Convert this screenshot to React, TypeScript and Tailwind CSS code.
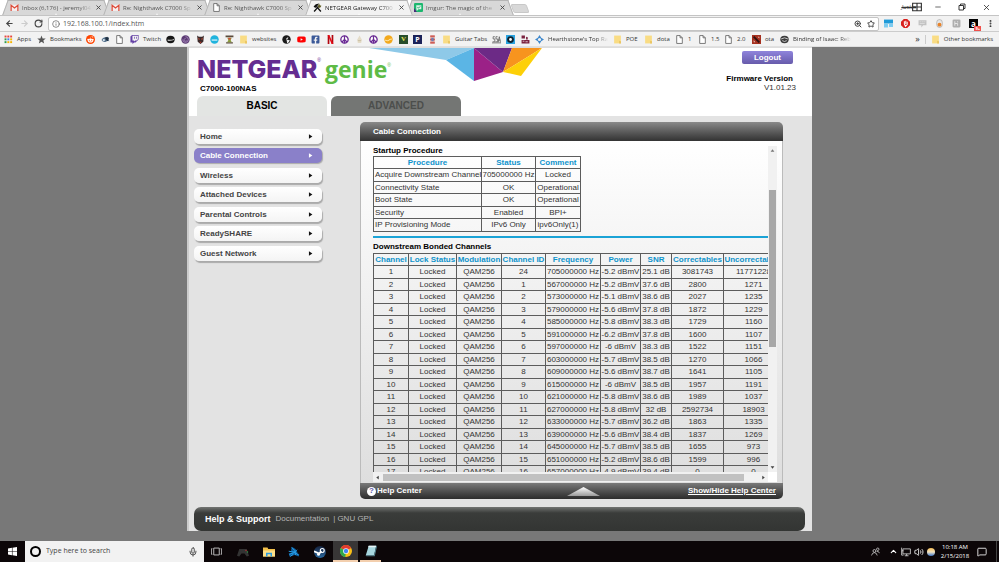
import type { ReactNode } from 'react';
import { FaRedditAlien, FaTwitch, FaYoutube, FaFacebookSquare, FaSteam } from 'react-icons/fa';
import {
  ArrowLeft,
  ArrowRight,
  ChevronUp,
  Info,
  MessageSquare,
  Mic,
  Minus,
  MoreVertical,
  RotateCw,
  Star,
  Volume2,
  X,
  ZoomIn,
} from 'lucide-react';

const uiFont = "font-['Open_Sans','Noto_Sans',sans-serif]";
const pageFont = "font-['Liberation_Sans',Arial,sans-serif]";

/* ---------- small icons ---------- */

function Svg({ children, box = 16, className = 'size-[9px]' }: { children: ReactNode; box?: number; className?: string }) {
  return (
    <svg viewBox={`0 0 ${box} ${box}`} className={`shrink-0 ${className}`} fill="none" aria-hidden="true">
      {children}
    </svg>
  );
}

const FileIcon = () => (
  <Svg>
    <path d="M3 1h6l4 4v10H3zM9 1v4h4" stroke="#666" strokeWidth="1.5" fill="#fff" />
  </Svg>
);

const Folder = () => (
  <Svg>
    <path d="M2 1h12v14H2z" fill="#f9dc84" />
    <path d="M11 10l3 1v4h-3z" fill="#e9c25e" />
  </Svg>
);

const Gmail = () => (
  <Svg>
    <path d="M1 3h14v11H1z" fill="#f7eeee" />
    <path d="M2 14V4l6 5 6-5v10" stroke="#dd4b39" strokeWidth="2.2" />
  </Svg>
);

const Tools = () => (
  <Svg>
    <path d="M2 15l8-9M14 15L6 6" stroke="#111" strokeWidth="2.4" />
    <path d="M1 6l4-4 6-1-3 4-4 4z" fill="#111" />
    <path d="M9 5l2-4 1 3 3 1-2 3-3 1z" fill="#5d5a1e" />
  </Svg>
);

const ImgurIcon = () => (
  <Svg>
    <rect width="16" height="16" rx="2" fill="#1bb76e" />
    <path d="M4 4h9v7H8l-3 3-1-4z" fill="#d6f5e5" />
    <path d="M0 9l5 7H0z" fill="#4b2a7b" />
    <path d="M6 8l2 1 3-3" stroke="#178c55" strokeWidth="1.5" />
  </Svg>
);

const AppsGrid = () => (
  <Svg>
    {['#e8453c', '#e8453c', '#e8453c', '#2f9e4f', '#4285f4', '#f5b400', '#2f9e4f', '#f5b400', '#f5b400'].map((c, i) => (
      <rect key={i} x={1 + (i % 3) * 5} y={1 + Math.floor(i / 3) * 5} width="3.4" height="3.4" fill={c} />
    ))}
  </Svg>
);

const StarSolid = () => (
  <Svg>
    <path d="M8 1l2 5 5.500.4-4.200 3.500 1.400 5.100L8 12.200 3.300 15l1.400-5.100L.5 6.400 6 6z" fill="#555" />
  </Svg>
);

const RedditIcon = () => (
  <span className="flex size-[9px] shrink-0 items-center justify-center rounded-full bg-[#ff4500] text-white">
    <FaRedditAlien size={7} />
  </span>
);

const BirdIcon = () => (
  <Svg>
    <path d="M1 9c2-4 6-6 9-4l4-1-1 4 2 3-4-1c-3 4-8 3-10-1z" fill="#54708c" />
    <path d="M7 5l4-2 3 3-2 5-3-2z" fill="#1f3042" />
    <circle cx="5" cy="9" r="2" fill="#dbe6ee" />
  </Svg>
);

const BlackDisc = () => (
  <Svg>
    <ellipse cx="8" cy="8" rx="7.500" ry="6.500" fill="#161616" />
    <path d="M3 8c3 1 8 1 11-1v2c-4 1.500-8 1.500-11 1z" fill="#e8e8e8" />
  </Svg>
);

const SwirlIcon = () => (
  <Svg>
    <circle cx="8" cy="8" r="7.500" fill="#5b3a73" />
    <path d="M8 3a5 5 0 11-5 5M8 6a2.500 2.500 0 102 4" stroke="#a98bbd" strokeWidth="1.500" />
  </Svg>
);

const MaskIcon = () => (
  <Svg>
    <path d="M2 1l3 2h6l3-2-1 11-5 4-5-4z" fill="#3a2a2a" />
    <path d="M4 5l3 2-2 2zM12 5L9 7l2 2z" fill="#d9533a" />
    <path d="M6 12h4l-2 3z" fill="#b83a2a" />
  </Svg>
);

const CyanDisc = () => (
  <Svg>
    <circle cx="8" cy="8" r="7.500" fill="#1fb3dd" />
    <path d="M3 8h10v2H3z" fill="#e9fbff" />
  </Svg>
);

const FigureIcon = () => (
  <Svg>
    <path d="M1 1h14v3H1zM2 13h12v2H2z" fill="#5a4a3c" />
    <path d="M4 5h8l-2 4 2 4H4l2-4z" fill="#8a9a3c" />
    <rect x="6" y="5" width="4" height="3" fill="#d8483c" />
  </Svg>
);

const GhostDisc = () => (
  <Svg>
    <circle cx="8" cy="8" r="7.500" fill="#1b1b1b" />
    <path d="M8 8a3 3 0 013-3M9 9l4 1-3 4z" stroke="#fff" strokeWidth="1.500" fill="#fff" />
  </Svg>
);

const NetflixIcon = () => (
  <Svg>
    <path d="M3 0h3v16H3zM10 0h3v16h-3z" fill="#b1060f" />
    <path d="M3 0h3l7 16h-3z" fill="#e50914" />
  </Svg>
);

const PeaceIcon = () => (
  <Svg>
    <circle cx="8" cy="8" r="6.500" stroke="#6a2a94" strokeWidth="2.400" fill="#fff" />
    <path d="M8 1.500v13M8 8l-4.500 4.500M8 8l4.500 4.500" stroke="#6a2a94" strokeWidth="2.200" />
  </Svg>
);

const ConeIcon = () => (
  <Svg>
    <path d="M8 1l4 7-1 6H5L4 8z" fill="#e4dcc8" />
    <path d="M5 10h6" stroke="#b8a988" />
  </Svg>
);

const YellowDisc = () => (
  <Svg>
    <circle cx="8" cy="8" r="7.500" fill="#f3a91c" />
    <path d="M2 9q5 3 8-1l4-1" stroke="#ffe39a" strokeWidth="2" />
  </Svg>
);

const GreenTile = () => (
  <span className="flex h-[9px] w-[9px] shrink-0 items-center justify-center bg-[#264d2b] font-['Liberation_Serif',serif] text-[7px] font-bold leading-none text-[#e8e25a]">
    V
  </span>
);

const NavyTile = () => (
  <span className="flex h-[9px] w-[9px] shrink-0 items-center justify-center bg-[#1b2258] text-[7px] font-bold leading-none text-white">
    P
  </span>
);

const RedStrip = () => (
  <Svg>
    <rect x="4" y="1" width="8" height="14" fill="#e4a7a0" />
    <path d="M4 2h8M4 8h8M4 14h8" stroke="#c8453c" strokeWidth="2.500" />
    <rect x="6" y="5" width="4" height="6" fill="#6a7fb8" />
  </Svg>
);

const ScribbleIcon = () => (
  <Svg>
    <path d="M5 3H2v4h3v5H1M10 3H7v4h3v5H6M11 13l2-10 2 10M11 9h4M0 14h16" stroke="#555" strokeWidth="1.300" />
  </Svg>
);

const EyeTile = () => (
  <Svg>
    <rect width="16" height="16" fill="#2aa3e0" />
    <circle cx="8" cy="8" r="6" fill="#10222e" />
    <circle cx="8" cy="8" r="2.500" fill="#fff" />
  </Svg>
);

const MaroonIcon = () => (
  <Svg>
    <path d="M1 1h6v5H1zM1 9h14v6H1zM9 3l3 1v4H9z" fill="#7b2340" />
    <path d="M3 11h3M8 12h4" stroke="#f0d6de" strokeWidth="1.500" />
  </Svg>
);

const DiamondIcon = () => (
  <Svg>
    <path d="M8 0l3 5 5 3-5 3-3 5-3-5-5-3 5-3z" fill="#3b86cc" />
    <circle cx="8" cy="8" r="2.800" fill="#f1f1f1" />
  </Svg>
);

const DotaIcon = () => (
  <Svg>
    <rect width="16" height="16" fill="#a5301f" />
    <path d="M3 3l10 10" stroke="#2c1210" strokeWidth="3" />
    <path d="M3 9l3 4H3zM10 3h3v3z" fill="#e9c9c2" />
  </Svg>
);

const SpringIcon = () => (
  <Svg>
    <ellipse cx="8" cy="8" rx="7.500" ry="6.500" fill="#3c3c3c" />
    <path d="M2 7q6-4 12 0M4 10q4 3 8 0" stroke="#ddd" strokeWidth="1.500" />
  </Svg>
);

/* ---------- browser chrome ---------- */

const tabs = [
  { title: 'Inbox (6,176) - jeremyl04', icon: <Gmail />, active: false },
  { title: 'Re: Nighthawk C7000 Sp', icon: <Gmail />, active: false },
  { title: 'Re: Nighthawk C7000 Sp', icon: <FileIcon />, active: false },
  { title: 'NETGEAR Gateway C700', icon: <Tools />, active: true },
  { title: 'Imgur: The magic of the', icon: <ImgurIcon />, active: false },
];

const bookmarks: { icon: ReactNode; label?: string; width: string; fade?: boolean }[] = [
  { icon: <AppsGrid />, label: 'Apps', width: 'w-[33px]' },
  { icon: <StarSolid />, label: 'Bookmarks', width: 'w-[49px]' },
  { icon: <RedditIcon />, width: 'w-[15px]' },
  { icon: <BirdIcon />, width: 'w-[14px]' },
  { icon: <FileIcon />, width: 'w-[15px]' },
  { icon: <FaTwitch className="shrink-0 text-[#6441a5]" size={9} />, label: 'Twitch', width: 'w-[36px]' },
  { icon: <BlackDisc />, width: 'w-[15px]' },
  { icon: <SwirlIcon />, width: 'w-[15px]' },
  { icon: <MaskIcon />, width: 'w-[14px]' },
  { icon: <CyanDisc />, width: 'w-[15px]' },
  { icon: <FigureIcon />, width: 'w-[14px]' },
  { icon: <Folder />, label: 'websites', width: 'w-[43px]' },
  { icon: <GhostDisc />, width: 'w-[15px]' },
  { icon: <FaYoutube className="shrink-0 text-[#f00]" size={9} />, width: 'w-[14px]' },
  { icon: <FaFacebookSquare className="shrink-0 text-[#3b5998]" size={9} />, width: 'w-[15px]' },
  { icon: <NetflixIcon />, width: 'w-[14px]' },
  { icon: <PeaceIcon />, width: 'w-[15px]' },
  { icon: <ConeIcon />, width: 'w-[14px]' },
  { icon: <PeaceIcon />, width: 'w-[15px]' },
  { icon: <YellowDisc />, width: 'w-[15px]' },
  { icon: <GreenTile />, width: 'w-[14px]' },
  { icon: <NavyTile />, width: 'w-[15px]' },
  { icon: <RedStrip />, width: 'w-[14px]' },
  { icon: <Folder />, label: 'Guitar Tabs', width: 'w-[50px]' },
  { icon: <ScribbleIcon />, width: 'w-[14px]' },
  { icon: <EyeTile />, width: 'w-[15px]' },
  { icon: <MaroonIcon />, width: 'w-[14px]' },
  { icon: <DiamondIcon />, label: "Hearthstone's Top Ra", width: 'w-[78px]', fade: true },
  { icon: <Folder />, label: 'POE', width: 'w-[31px]' },
  { icon: <Folder />, label: 'dota', width: 'w-[31px]' },
  { icon: <FileIcon />, label: '1', width: 'w-[23px]' },
  { icon: <FileIcon />, label: '1.5', width: 'w-[26px]' },
  { icon: <FileIcon />, label: '2.0', width: 'w-[28px]' },
  { icon: <DotaIcon />, label: 'ota', width: 'w-[28px]' },
  { icon: <SpringIcon />, label: 'Binding of Isaac: Reb', width: 'w-[76px]', fade: true },
];

function BrowserTab({ title, icon, active }: { title: string; icon: ReactNode; active: boolean }) {
  const fill = active ? 'bg-[#f2f2f2]' : 'bg-[#d8d8d8]';
  return (
    <div className={`relative -mr-[4px] h-[15px] w-[105px] ${active ? 'z-10' : ''}`}>
      <span className={`absolute inset-y-0 left-[2px] w-1/2 -skew-x-[20deg] border-l border-t border-[#b4b4b4] ${fill}`} />
      <span className={`absolute inset-y-0 right-[2px] w-1/2 skew-x-[20deg] border-r border-t border-[#b4b4b4] ${fill}`} />
      <div className="relative flex h-full items-center gap-[3px] pl-[7px] pr-[6px]">
        {icon}
        <span
          className={`flex-1 whitespace-nowrap text-[6px] leading-[10px] [mask-image:linear-gradient(to_right,black_80%,transparent)] ${
            active ? 'text-[#222]' : 'text-[#555]'
          }`}
        >
          {title}
        </span>
        <button aria-label="Close tab">
          <X className="size-[7px] text-[#444]" strokeWidth={3} />
        </button>
      </div>
    </div>
  );
}

function Browser() {
  return (
    <header className={`${uiFont} bg-[#f2f2f2]`}>
      <div className="flex h-[16px] items-start border-b border-[#c4c4c4] bg-white pl-[3px]">
        {tabs.map((tab, i) => (
          <BrowserTab key={i} {...tab} />
        ))}
        <button aria-label="New tab" className="ml-[4px] mt-[4px] h-[9px] w-[16px] skew-x-[20deg] rounded-[2px] border border-[#c8c8c8] bg-[#d8d8d8]" />
        <div className="ml-auto flex h-[14px] items-center pr-2">
          <span className="-mr-[4px] text-[6px] italic text-[#333] line-through">Justin</span>
          <Svg className="mr-3 size-[10px]">
            <path d="M1 2h14v12H1zM8 2v12M1 8h14" stroke="#333" strokeWidth="1.800" />
          </Svg>
          <button aria-label="Minimize" className="mr-4">
            <Minus className="size-[8px] text-[#222]" />
          </button>
          <button aria-label="Restore" className="mr-4">
            <Svg className="size-[8px]">
              <path d="M2 5h9v9H2zM5 5V2h9v9h-3" stroke="#222" strokeWidth="1.800" />
            </Svg>
          </button>
          <button aria-label="Close">
            <X className="size-[9px] text-[#222]" />
          </button>
        </div>
      </div>

      <div className="flex h-[16px] items-center border-b border-[#ccc] pl-[5px] pr-[4px]">
        <button aria-label="Back" className="mr-[6px]">
          <ArrowLeft className="size-[9px] text-[#444]" strokeWidth={3} />
        </button>
        <button aria-label="Forward" className="mr-[5px]">
          <ArrowRight className="size-[9px] text-[#ccc]" strokeWidth={3} />
        </button>
        <button aria-label="Reload" className="mr-[5px]">
          <RotateCw className="size-[9px] text-[#444]" strokeWidth={3} />
        </button>
        <div className="flex h-[14px] flex-1 items-center rounded-[2px] border border-[#c4c4c4] bg-white px-[3px]">
          <Info className="size-[8px] text-[#555]" />
          <input
            aria-label="Address"
            defaultValue="192.168.100.1/index.htm"
            className="ml-[3px] flex-1 bg-transparent text-[7px] leading-[12px] text-[#555] outline-none"
          />
          <ZoomIn className="mr-[5px] size-[8px] text-[#444]" strokeWidth={3} />
          <Star className="size-[8px] text-[#444]" strokeWidth={3} />
        </div>
        <div className="ml-[5px] flex items-center gap-2">
          <Svg>
            <path d="M0 1h16v7H0z" fill="#1f9ad8" />
            <path d="M0 8h7v7H0zM9 9h7v5H9z" fill="#7ccbf0" />
          </Svg>
          <Svg>
            <path d="M5 0h6l5 5v6l-5 5H5l-5-5V5z" fill="#d8201c" />
            <path d="M6 4v5l2 4 3-3V5M8.500 3v6" stroke="#fff" strokeWidth="1.800" />
          </Svg>
          <Svg>
            <path d="M1 2h14v9H9l-3 4v-4H1z" fill="#c2c2c2" />
            <path d="M3 5h3M7 5h3M11 5h2M3 8h9" stroke="#eee" />
          </Svg>
          <Svg>
            <rect x="3" y="1" width="10" height="14" rx="5" fill="#e6e6e6" stroke="#999" />
            <circle cx="8" cy="10" r="3.500" fill="#e8832a" />
          </Svg>
          <Svg>
            <rect x="1" y="1" width="14" height="14" rx="2" fill="#aeaeae" />
            <path d="M5 4v8M5 8h5v4M10 4v2" stroke="#eee" strokeWidth="1.500" />
          </Svg>
          <div className="relative flex size-[9px] items-center justify-center bg-black text-[8px] font-bold leading-none text-white">
            a
            <span className="absolute -bottom-[3px] -right-[3px] bg-[#f0504c] px-px text-[4px] leading-[5px]">9+</span>
          </div>
          <MoreVertical className="size-[9px] text-[#333]" strokeWidth={3} />
        </div>
      </div>

      <nav className="flex h-[15px] items-center border-b border-[#e0e0e0] pl-1 pr-[6px] text-[6px] leading-[10px] text-[#333]">
        {bookmarks.map(({ icon, label, width, fade }, i) => (
          <a key={i} href="#" className={`flex shrink-0 items-center gap-[4px] ${width}`}>
            {icon}
            {label && (
              <span className={`whitespace-nowrap ${fade ? '[mask-image:linear-gradient(to_right,black_80%,transparent)]' : ''}`}>
                {label}
              </span>
            )}
          </a>
        ))}
        <span className="ml-auto text-[9px]">»</span>
        <span className="mx-[5px] h-[9px] w-px bg-[#ccc]" />
        <a href="#" className="flex items-center gap-[4px] whitespace-nowrap">
          <Folder />
          Other bookmarks
        </a>
      </nav>
    </header>
  );
}

/* ---------- router page ---------- */

const menu = ['Home', 'Cable Connection', 'Wireless', 'Attached Devices', 'Parental Controls', 'ReadySHARE', 'Guest Network'];

const startup = [
  ['Acquire Downstream Channel', '705000000 Hz', 'Locked'],
  ['Connectivity State', 'OK', 'Operational'],
  ['Boot State', 'OK', 'Operational'],
  ['Security', 'Enabled', 'BPI+'],
  ['IP Provisioning Mode', 'IPv6 Only', 'ipv6Only(1)'],
];

// channel id, frequency (MHz), power, snr, correctables, uncorrectables
const channels: [number, number, string, string, number, number][] = [
  [24, 705, '-5.2', '25.1', 3081743, 11771228],
  [1, 567, '-5.2', '37.6', 2800, 1271],
  [2, 573, '-5.1', '38.6', 2027, 1235],
  [3, 579, '-5.6', '37.8', 1872, 1229],
  [4, 585, '-5.8', '38.3', 1729, 1160],
  [5, 591, '-6.2', '37.8', 1600, 1107],
  [6, 597, '-6', '38.3', 1522, 1151],
  [7, 603, '-5.7', '38.5', 1270, 1066],
  [8, 609, '-5.6', '38.7', 1641, 1105],
  [9, 615, '-6', '38.5', 1957, 1191],
  [10, 621, '-5.8', '38.6', 1989, 1037],
  [11, 627, '-5.8', '32', 2592734, 18903],
  [12, 633, '-5.7', '36.2', 1863, 1335],
  [13, 639, '-5.6', '38.4', 1837, 1269],
  [14, 645, '-5.7', '38.5', 1655, 973],
  [15, 651, '-5.2', '38.6', 1599, 996],
  [16, 657, '-4.9', '39.4', 0, 0],
];

const rowClass = 'h-[12px] even:h-[13px]';
const cell = 'border border-[#5c5c5c] p-0 whitespace-nowrap';
const headCell = `${cell} text-center font-bold text-[#0f93cc]`;

function StartupTable() {
  return (
    <table className="w-[207px] table-fixed border-collapse leading-[10px]">
      <colgroup>
        <col className="w-[108px]" />
        <col className="w-[54px]" />
        <col className="w-[45px]" />
      </colgroup>
      <tbody>
        <tr className={rowClass}>
          {['Procedure', 'Status', 'Comment'].map((h) => (
            <th key={h} className={headCell}>{h}</th>
          ))}
        </tr>
        {startup.map(([name, status, comment]) => (
          <tr key={name} className={rowClass}>
            <td className={`${cell} pl-px`}>{name}</td>
            <td className={`${cell} text-center`}>{status}</td>
            <td className={`${cell} text-center`}>{comment}</td>
          </tr>
        ))}
      </tbody>
    </table>
  );
}

function ChannelTable() {
  return (
    <table className="w-[410px] table-fixed border-collapse text-center leading-[10px]">
      <colgroup>
        <col className="w-[35px]" />
        <col className="w-[48px]" />
        <col className="w-[45px]" />
        <col className="w-[44px]" />
        <col className="w-[55px]" />
        <col className="w-[40px]" />
        <col className="w-[31px]" />
        <col className="w-[52px]" />
        <col className="w-[60px]" />
      </colgroup>
      <tbody>
        <tr className={rowClass}>
          {['Channel', 'Lock Status', 'Modulation', 'Channel ID', 'Frequency', 'Power', 'SNR', 'Correctables', 'Uncorrectables'].map((h) => (
            <th key={h} className={headCell}>{h}</th>
          ))}
        </tr>
        {channels.map(([id, freq, power, snr, corr, uncorr], i) => (
          <tr key={id} className={rowClass}>
            <td className={cell}>{i + 1}</td>
            <td className={cell}>Locked</td>
            <td className={cell}>QAM256</td>
            <td className={cell}>{id}</td>
            <td className={cell}>{freq}000000 Hz</td>
            <td className={cell}>{power} dBmV</td>
            <td className={cell}>{snr} dB</td>
            <td className={cell}>{corr}</td>
            <td className={cell}>{uncorr}</td>
          </tr>
        ))}
      </tbody>
    </table>
  );
}

function CablePanel() {
  return (
    <section className="min-w-0 flex-1">
      <h2 className="flex h-[19px] items-center rounded-t-[5px] bg-linear-to-b from-[#8a8a8a] to-[#333] pl-[13px] font-bold text-white">
        Cable Connection
      </h2>
      <div className="border-x border-[#bbb] bg-linear-to-b from-white to-[#dedede] pb-px pl-[12px] pr-[5px] pt-[5px]">
        <div className="flex">
          <div className="h-[326px] min-w-0 flex-1 overflow-hidden text-[#333]">
            <h3 className="h-[10px] font-bold leading-[10px] text-black">Startup Procedure</h3>
            <StartupTable />
            <hr className="mt-[4px] border-t-2 border-[#1ba3d6]" />
            <h3 className="mt-[4px] h-[11px] font-bold leading-[10px] text-black">Downstream Bonded Channels</h3>
            <ChannelTable />
          </div>
          <div className="flex w-[9px] flex-col items-center bg-[#f1f1f1] py-[2px]">
            <Svg className="size-[5px]">
              <path d="M8 4l6 8H2z" fill="#777" />
            </Svg>
            <div className="mt-[37px] h-[157px] w-[7px] bg-[#a8a8a8]" />
            <Svg className="mt-auto size-[5px]">
              <path d="M8 12l6-8H2z" fill="#444" />
            </Svg>
          </div>
        </div>
        <div className="flex h-[10px]">
          <div className="flex flex-1 items-center bg-[#f1f1f1] px-[2px]">
            <Svg className="size-[5px]">
              <path d="M4 8l8-6v12z" fill="#444" />
            </Svg>
            <div className="ml-[3px] mr-[17px] h-[7px] flex-1 bg-[#c1c1c1]" />
            <Svg className="size-[5px]">
              <path d="M12 8L4 2v12z" fill="#444" />
            </Svg>
          </div>
          <div className="w-[9px] bg-white" />
        </div>
      </div>
      <div className="grid h-[16px] grid-cols-3 items-center rounded-b-[5px] bg-linear-to-b from-[#7a7a7a] to-[#2c2c2c] px-[7px] font-bold text-white">
        <button className="flex items-center gap-px text-left">
          <span className="flex size-[9px] items-center justify-center rounded-full bg-white text-[8px] leading-none text-[#5a55a8]">?</span>
          Help Center
        </button>
        <svg viewBox="0 0 33 9" className="ml-[64px] h-[9px] w-[33px]" aria-hidden="true">
          <linearGradient id="arrow" x1="0" y1="0" x2="0" y2="1">
            <stop offset="0" stopColor="#fff" />
            <stop offset="1" stopColor="#999" />
          </linearGradient>
          <path d="M16.500 0L33 9H0z" fill="url(#arrow)" />
        </svg>
        <a href="#" className="text-right underline">Show/Hide Help Center</a>
      </div>
    </section>
  );
}

function RouterPage() {
  return (
    <div className={`${pageFont} mx-auto w-full max-w-[625px] border-l-2 border-[#ccc] bg-[#e3e3e3] text-[8px] leading-[10px]`}>
      <div className="relative flex h-[69px] items-start justify-between border-t border-[#ddd] bg-white pl-[8px] pr-[16px]">
        <svg viewBox="0 0 173 33" className="absolute left-[180px] top-0 h-[33px] w-[173px]" aria-hidden="true">
          <path d="M0 0h105L77 12z" fill="#8ec9e8" />
          <path d="M105 0L77 12l28 21z" fill="#5bb5e5" />
          <path d="M105 0l29 24-29 9z" fill="#9b2187" />
          <path d="M105 0h38l-9 24z" fill="#6c2a86" />
          <path d="M143 0h30l-39 24z" fill="#f7941e" />
          <path d="M173 0l-21 28-18-4z" fill="#fdd008" />
        </svg>
        <div className="relative flex h-full flex-col">
          <h1 className="mt-[7px] flex h-[28px] items-baseline leading-[28px]">
            <span className="font-['Inter',sans-serif] text-[25px] font-extrabold text-[#652d91]">NETGEAR</span>
            <sup className="self-start text-[5px] leading-[14px] text-[#652d91]">®</sup>
            <span className="ml-[4px] font-['Open_Sans',sans-serif] text-[23px] font-bold text-[#5ebb46]">genie</span>
            <sup className="self-start text-[5px] leading-[24px] text-[#5ebb46]">®</sup>
          </h1>
          <div className="pl-[3px] font-bold leading-[12px] text-black">C7000-100NAS</div>
          <div className="mt-auto flex gap-[4px] text-[10px] font-bold">
            <button className="h-[20px] w-[130px] rounded-t-[6px] bg-[#e3e5e3] text-black">BASIC</button>
            <button className="h-[20px] w-[130px] rounded-t-[6px] bg-[#747674] text-[#4c4e4c]">ADVANCED</button>
          </div>
        </div>
        <div className="flex flex-col items-end pt-[3px] text-[#333]">
          <button className="mr-[3px] h-[13px] w-[51px] rounded-[2px] bg-linear-to-b from-[#8f84dc] to-[#675bab] font-bold text-white">Logout</button>
          <div className="mr-[3px] mt-[10px] font-bold leading-[9px] text-black">Firmware Version</div>
          <div className="leading-[9px]">V1.01.23</div>
        </div>
      </div>

      <div className="flex pl-[5px] pr-[29px] pt-[6px]">
        <nav className="mr-[38px] w-[128px] shrink-0 pt-[7px]">
          {menu.map((name) => {
            const active = name === 'Cable Connection';
            return (
              <a
                key={name}
                href="#"
                className={`mb-[5px] flex h-[15px] items-center justify-between rounded-[5px] pl-[6px] pr-[9px] font-bold odd:mb-[4px] ${
                  active
                    ? 'bg-[#8a80c9] text-white shadow-[1px_1px_1px_#aaa]'
                    : 'bg-linear-to-b from-white to-[#f4f4f4] text-[#444] shadow-[1px_2px_1px_#aaa]'
                }`}
              >
                {name}
                <Svg className="size-[5px]">
                  <path d="M3 1l11 7-11 7z" fill={active ? '#fff' : '#111'} />
                </Svg>
              </a>
            );
          })}
        </nav>
        <CablePanel />
      </div>

      <footer className="ml-[5px] mr-[7px] mt-[8px] flex h-[24px] items-center rounded-[7px] bg-linear-to-b from-[#737573] via-[#3a3c3a] via-25% to-[#333533] pl-[11px] text-[#b5b5b5]">
        <span className="mr-[5px] text-[9px] font-bold text-white">Help &amp; Support</span>
        <a href="#">Documentation</a>
        <span className="ml-[4px] mr-[2px]">|</span>
        <a href="#">GNU GPL</a>
      </footer>
    </div>
  );
}

/* ---------- taskbar ---------- */

function Taskbar() {
  return (
    <footer className={`${uiFont} flex h-[21px] items-stretch bg-[#0c0608] text-white`}>
      <button aria-label="Start" className="flex w-[25px] items-center justify-center">
        <Svg>
          <path d="M0 2.500l7-1v6H0zM8 1.300L16 0v7.500H8zM0 8.500h7v6l-7-1zM8 8.500h8V16l-8-1.200z" fill="#fff" />
        </Svg>
      </button>
      <label className="flex w-[179px] items-center bg-[#f2f2f2] pl-[5px] pr-[6px]">
        <span className="size-[11px] shrink-0 rounded-full border-2 border-black" />
        <input aria-label="Search" placeholder="Type here to search" className="ml-[5px] min-w-0 flex-1 bg-transparent text-[7px] outline-none placeholder:text-[#444]" />
        <Mic className="size-[10px] text-[#333]" />
      </label>
      <div className="flex w-[25px] items-center justify-center">
        <Svg className="size-[11px]">
          <path d="M4 3h8v10H4zM2 4H.5v8H2M14 4h1.500v8H14" stroke="#ddd" strokeWidth="1.200" />
        </Svg>
      </div>
      <div className="flex w-[27px] items-center justify-center">
        <Svg className="size-[12px]">
          <path d="M3 4h10l3 9-3 1-3-4H6l-3 4-3-1z" fill="#333" />
          <circle cx="12" cy="6" r="1" fill="#a33" />
          <circle cx="14" cy="8" r="1" fill="#394" />
        </Svg>
      </div>
      <div className="flex w-[25px] items-center justify-center">
        <Svg className="size-[12px]">
          <path d="M0 2h6l1 2h9v10H0z" fill="#f3c04a" />
          <path d="M0 6h16v8H0z" fill="#fde08a" />
          <path d="M4 9h8v5h-2v-3H6v3H4z" fill="#2c9be0" />
        </Svg>
      </div>
      <div className="flex w-[26px] items-center justify-center">
        <Svg className="size-[12px]">
          <path d="M5 1l5 3 3 5-5 1-4-4zM1 10l7-3 7 4-1 3-5-2-7 2z" fill="#0d5f9e" />
          <path d="M5 2l4 4 1 6M12 5l-4 4-6 2M3 14l4-3M1 7l7 1 6 4" stroke="#2aa0ea" strokeWidth="1.300" />
        </Svg>
      </div>
      <div className="flex w-[26px] items-center justify-center">
        <span className="flex size-[12px] items-center justify-center rounded-full bg-linear-to-b from-[#15233f] to-[#2a6aa0]">
          <Svg className="size-[12px]">
            <path d="M0 7l7 3 3-3" stroke="#fff" strokeWidth="2.400" />
            <circle cx="11" cy="6" r="2.600" stroke="#fff" strokeWidth="1.500" />
            <circle cx="6" cy="11" r="2" fill="#fff" />
          </Svg>
        </span>
      </div>
      <div className="flex w-[25px] items-center justify-center border-b-2 border-[#f3cfae] bg-[#383636] pt-px">
        <Svg className="size-[12px]">
          <circle cx="8" cy="8" r="8" fill="#fbc116" />
          <path d="M8 8L1 4a8 8 0 0114 0z" fill="#e33b2e" />
          <path d="M8 8L1 4a8 8 0 006 12z" fill="#2da94f" />
          <circle cx="8" cy="8" r="3.800" fill="#fff" />
          <circle cx="8" cy="8" r="2.900" fill="#4285f4" />
        </Svg>
      </div>
      <div className="ml-[2px] flex w-[21px] items-center justify-center border-b-2 border-[#f3cfae] pt-px">
        <Svg className="size-[12px]">
          <path d="M5 1h10l-3 13H1z" fill="#a6d5dd" />
          <path d="M5 1h10l-1 2H4z" fill="#e9f4f5" />
          <path d="M12 14l3-13 1 1-3 13H2l-1-1z" fill="#4d7f8c" />
        </Svg>
      </div>

      <div className="ml-auto flex items-center">
        <Svg className="mr-[9px] size-[9px]">
          <circle cx="6" cy="7" r="2.500" stroke="#ddd" strokeWidth="1.300" />
          <circle cx="12" cy="4" r="2.200" stroke="#ddd" strokeWidth="1.300" />
          <path d="M1 15q1-5 5-5t5 5M10 8q4-1 5 3" stroke="#ddd" strokeWidth="1.300" />
        </Svg>
        <ChevronUp className="mr-[3px] size-[9px]" strokeWidth={3} />
        <Svg className="mr-[3px] size-[10px]">
          <path d="M3 3h12v8H3zM9 11v3M6 14h6M1 1v5h3M1 6v7h3" stroke="#ddd" strokeWidth="1.300" />
        </Svg>
        <Volume2 className="mr-[3px] size-[10px]" />
        <span className="mr-[5px] size-[8px] rounded-full bg-linear-to-b from-[#f3bb4e] via-[#f4e4c0] to-[#3d73c4]" />
        <div className="w-[30px] text-center text-[6px] leading-[9px]">
          <div>10:18 AM</div>
          <div>2/15/2018</div>
        </div>
        <MessageSquare className="ml-[7px] size-[10px]" />
        <span className="ml-[9px] mr-[2px] h-[21px] w-px bg-[#444]" />
      </div>
    </footer>
  );
}

export default function App() {
  return (
    <div className="flex min-h-screen flex-col bg-[#787878]">
      <Browser />
      <main className="flex-1">
        <RouterPage />
      </main>
      <Taskbar />
    </div>
  );
}
